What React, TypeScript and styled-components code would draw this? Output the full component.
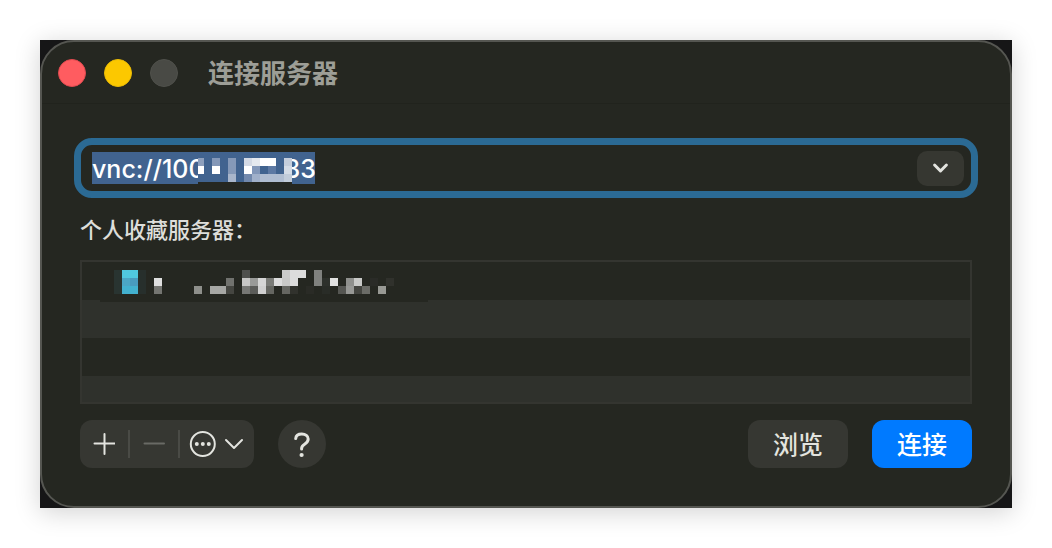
import React from "react";
import styled, { createGlobalStyle } from "styled-components";

const GlobalStyle = createGlobalStyle`
  * { box-sizing: border-box; }
  body {
    margin: 0;
    background: #ffffff;
    font-family: Inter, "Noto Sans CJK SC", sans-serif;
  }
  button, input { font-family: inherit; }
`;

const Page = styled.main`
  padding: 40px;
`;

const Backdrop = styled.div`
  background: #161617;
  box-shadow: 0 4px 24px rgba(0, 0, 0, 0.18);
`;

const Window = styled.section`
  border: 2px solid #555651;
  border-radius: 34px;
  background: #252721;
  overflow: hidden;
`;

const TitleBar = styled.header`
  display: flex;
  align-items: center;
  gap: 18px;
  height: 62px;
  padding: 0 16px;
  border-bottom: 1px solid #21231d;
`;

const Light = styled.button<{ $color: string; $edge: string }>`
  width: 28px;
  height: 28px;
  padding: 0;
  border: 1px solid ${(p) => p.$edge};
  border-radius: 50%;
  background: ${(p) => p.$color};
`;

const Title = styled.h1`
  margin: 0 0 0 12px;
  padding-top: 2px;
  color: #9d9e97;
  font-size: 26px;
  font-weight: 700;
  line-height: 32px;
`;

const Body = styled.form`
  display: flex;
  flex-direction: column;
  padding: 34px 38px 38px;
`;

const AddressField = styled.div`
  display: flex;
  align-items: center;
  justify-content: space-between;
  height: 60px;
  margin: 0 -6px;
  padding: 0 7px 0 11px;
  border: 7px solid #2b6a94;
  border-radius: 18px;
  background: #252721;
`;

const Selection = styled.div`
  position: relative;
  width: 223px;
  height: 32px;
`;

const AddressInput = styled.input`
  display: block;
  width: 100%;
  height: 32px;
  padding: 2px 0 0;
  border: 0;
  outline: 0;
  background: #41638f;
  color: #ffffff;
  font-size: 25px;
  font-weight: 500;
  line-height: 30px;
`;

const AddressMask = styled.svg`
  position: absolute;
  top: 0;
  left: 106px;
`;

const HistoryButton = styled.button`
  display: flex;
  align-items: center;
  justify-content: center;
  width: 47px;
  height: 35px;
  padding: 0;
  border: 0;
  border-radius: 10px;
  background: #363731;
`;

const ListLabel = styled.h2`
  margin: 16px 0 14px;
  color: #dddeda;
  font-size: 22px;
  font-weight: 500;
  line-height: 32px;
`;

const ServerList = styled.ul`
  height: 144px;
  margin: 0;
  padding: 0;
  border: 2px solid #343530;
  list-style: none;
  overflow: hidden;
`;

const ServerRow = styled.li`
  height: 38px;
  background: #252721;
  &:nth-child(even) { background: #2f312c; }
`;

const ServerMask = styled.svg`
  display: block;
  position: relative;
  margin-left: 18px;
`;

const Footer = styled.footer`
  display: flex;
  align-items: center;
  gap: 24px;
  margin-top: 16px;
`;

const ToolGroup = styled.div`
  display: flex;
  align-items: center;
  height: 48px;
  border-radius: 12px;
  background: #363732;
`;

const ToolButton = styled.button<{ $width: number }>`
  display: flex;
  align-items: center;
  justify-content: center;
  width: ${(p) => p.$width}px;
  height: 48px;
  padding: 0;
  border: 0;
  background: transparent;
`;

const Divider = styled.span`
  width: 2px;
  height: 28px;
  background: #4a4b46;
`;

const HelpButton = styled.button`
  display: flex;
  align-items: center;
  justify-content: center;
  width: 48px;
  height: 48px;
  padding: 0;
  border: 0;
  border-radius: 50%;
  background: #363732;
`;

const Actions = styled.div`
  display: flex;
  gap: 24px;
  margin-left: auto;
`;

const ActionButton = styled.button<{ $primary?: boolean }>`
  width: 100px;
  height: 48px;
  padding: 2px 0 0;
  border: 0;
  border-radius: 12px;
  background: ${(p) => (p.$primary ? "#007aff" : "#363732")};
  color: ${(p) => (p.$primary ? "#ffffff" : "#e3e4df")};
  font-size: 25px;
  font-weight: 500;
  line-height: 46px;
`;

type Block = [x: number, y: number, color: string, width?: number];

// Pixelated part of the address; coordinates are local to the mask.
const addressBlocks: Block[] = [
  [0, 6, "#8d9fbc", 6], [14, 6, "#8498b8"], [30, 6, "#8599b8"],
  [46, 6, "#d4dae5"], [54, 6, "#e5e9ef"], [62, 6, "#ffffff", 16], [86, 6, "#c5cedc"],
  [0, 14, "#ffffff", 6], [14, 14, "#ffffff"], [30, 14, "#8599b8"],
  [46, 14, "#ffffff"], [54, 14, "#8297b9"], [70, 14, "#5d79a3"], [86, 14, "#d5dce6"],
  [30, 22, "#a9b6cb"], [46, 22, "#7289ad"], [54, 22, "#a0b0ca"],
  [62, 22, "#b0bdd1", 24], [86, 22, "#c2ccda"],
];

const serverBlocks: Block[] = [
  [14, 8, "#293431"], [14, 16, "#293431"], [14, 24, "#293431"],
  [22, 8, "#50c8df", 16], [22, 16, "#4ba6c5"], [30, 16, "#499bbf"], [22, 24, "#43b1cf", 16],
  [38, 8, "#272f2c"], [38, 16, "#272f2c"], [38, 24, "#272f2c"],
  [54, 16, "#dfdfdf"], [54, 24, "#747571"],
  [94, 24, "#8e8f8b"], [110, 24, "#a6a7a4", 16], [126, 16, "#71726e"], [126, 24, "#454641"],
  [142, 8, "#4f504d"], [142, 16, "#c7c7c6"], [142, 24, "#777875"],
  [150, 16, "#999a98"], [150, 24, "#5b5c59"],
  [158, 16, "#d6d6d6"], [158, 24, "#d0d0d0"],
  [166, 16, "#7a7b77"], [166, 24, "#656661"],
  [174, 16, "#dddddd"], [182, 8, "#cbcbca"], [182, 16, "#c9c9c8"], [182, 24, "#656661"],
  [190, 8, "#dcdcdc", 16], [190, 16, "#dcdcdc"], [190, 24, "#31322d"],
  [206, 24, "#2a2b26"], [214, 8, "#80817e"], [214, 16, "#80817e"],
  [222, 16, "#2d302b"], [222, 24, "#292c27"], [230, 16, "#e1e1e0"],
  [238, 24, "#555652"], [246, 16, "#8f908d"], [246, 24, "#979895"],
  [254, 16, "#c9cac8"], [254, 24, "#444540"], [262, 24, "#6b6c67"],
  [270, 16, "#2a2b27"], [278, 24, "#989994"], [286, 16, "#30312c"],
];

const Blocks = ({ items }: { items: Block[] }) => (
  <g shapeRendering="crispEdges">
    {items.map(([x, y, color, width = 8]) => (
      <rect key={`${x}-${y}`} x={x} y={y} width={width} height={8} fill={color} />
    ))}
  </g>
);

const stroke = {
  fill: "none",
  stroke: "#e3e4df",
  strokeWidth: 2,
  strokeLinecap: "round",
  strokeLinejoin: "round",
} as const;

const address = "vnc://100" + "\u00a0".repeat(12) + "33";

export default function App() {
  return (
    <Page>
      <GlobalStyle />
      <Backdrop>
        <Window aria-labelledby="window-title">
          <TitleBar>
            <Light type="button" aria-label="关闭" $color="#ff5c60" $edge="#e04b50" />
            <Light type="button" aria-label="最小化" $color="#fcc800" $edge="#eabb05" />
            <Light type="button" aria-label="缩放" disabled $color="#494a45" $edge="#50514c" />
            <Title id="window-title">连接服务器</Title>
          </TitleBar>
          <Body onSubmit={(event) => event.preventDefault()}>
            <AddressField>
              <Selection>
                <AddressInput aria-label="服务器地址" defaultValue={address} spellCheck={false} />
                <AddressMask width="94" height="32" aria-hidden="true">
                  <rect width="94" height="30" fill="#41638f" />
                  <rect y="30" width="94" height="2" fill="#252721" />
                  <Blocks items={addressBlocks} />
                </AddressMask>
              </Selection>
              <HistoryButton type="button" aria-label="显示历史地址">
                <svg width="18" height="12" viewBox="0 0 18 12" {...stroke} strokeWidth={3}>
                  <path d="M2.6 3l5.9 6 5.9-6" />
                </svg>
              </HistoryButton>
            </AddressField>
            <ListLabel id="favorites">个人收藏服务器：</ListLabel>
            <ServerList aria-labelledby="favorites">
              <ServerRow>
                <ServerMask width="328" height="40" aria-hidden="true">
                  <rect width="328" height="40" fill="#252721" />
                  <Blocks items={serverBlocks} />
                </ServerMask>
              </ServerRow>
              <ServerRow />
              <ServerRow />
              <ServerRow />
            </ServerList>
            <Footer>
              <ToolGroup>
                <ToolButton type="button" aria-label="添加" $width={48}>
                  <svg width="22" height="22" viewBox="0 0 22 22" {...stroke}>
                    <path d="M11.5 1v20M1.5 10.5h20" />
                  </svg>
                </ToolButton>
                <Divider />
                <ToolButton type="button" aria-label="移除" disabled $width={48}>
                  <svg width="22" height="22" viewBox="0 0 22 22" {...stroke} stroke="#696a65">
                    <path d="M1.5 10.5h19.5" />
                  </svg>
                </ToolButton>
                <Divider />
                <ToolButton type="button" aria-label="更多选项" $width={74}>
                  <svg width="56" height="28" viewBox="0 0 56 28" {...stroke}>
                    <circle cx="13.8" cy="14" r="12" />
                    <g fill="#e3e4df" stroke="none">
                      <circle cx="7.8" cy="14" r="2" />
                      <circle cx="13.8" cy="14" r="2" />
                      <circle cx="19.8" cy="14" r="2" />
                    </g>
                    <path d="M37 10l8 8 8-8" />
                  </svg>
                </ToolButton>
              </ToolGroup>
              <HelpButton type="button" aria-label="帮助">
                <svg width="18" height="28" viewBox="0 0 18 28" {...stroke} strokeWidth={3}>
                  <path d="M2.7 8.6C3 5.4 5.5 4.1 8.8 4.1c3.7 0 6.4 2 6.4 5 0 2.7-1.6 3.9-3.6 5.1-2.1 1.3-3 2.3-3 4.2v.6" />
                  <circle cx="8.6" cy="25" r="2.1" fill="#e3e4df" stroke="none" />
                </svg>
              </HelpButton>
              <Actions>
                <ActionButton type="button">浏览</ActionButton>
                <ActionButton type="submit" $primary>连接</ActionButton>
              </Actions>
            </Footer>
          </Body>
        </Window>
      </Backdrop>
    </Page>
  );
}
